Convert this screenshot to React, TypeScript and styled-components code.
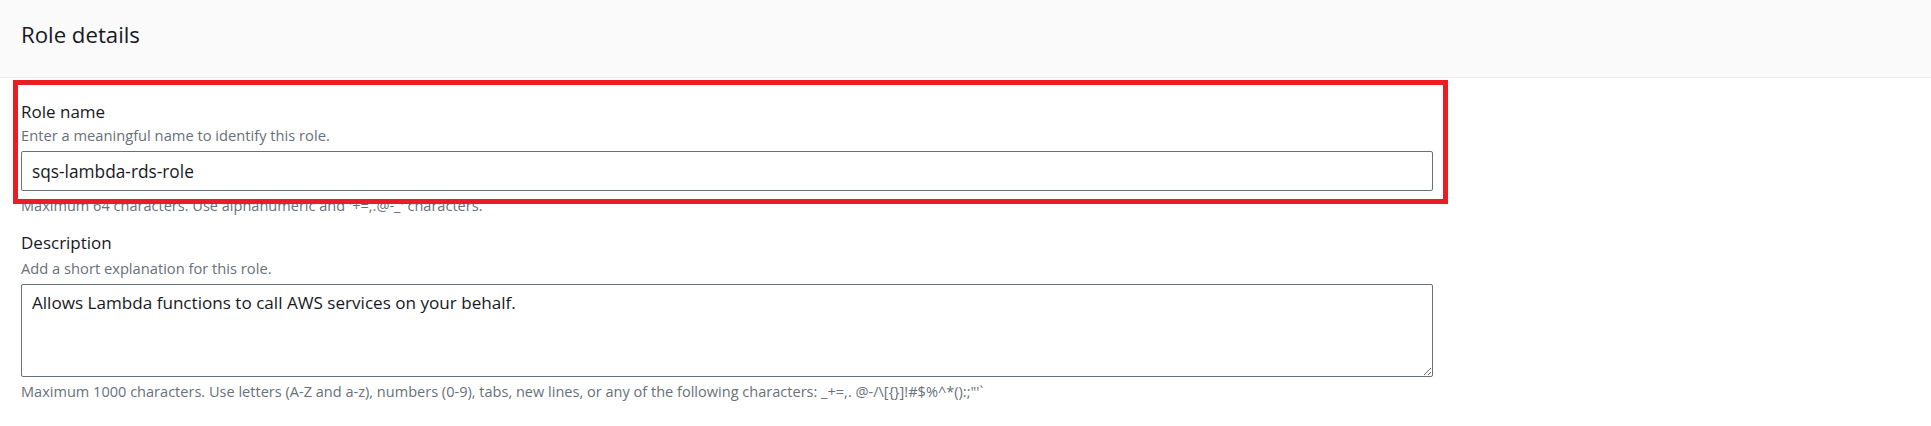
import React from "react";
import styled, { createGlobalStyle } from "styled-components";

const GlobalStyle = createGlobalStyle`
  html, body {
    margin: 0;
    padding: 0;
    background: #ffffff;
  }
  body {
    font-family: "Open Sans", "Noto Sans", Arial, sans-serif;
    color: #16191f;
  }
`;

const Page = styled.div`
  position: relative;
  width: 1931px;
  min-height: 426px;
  background: #ffffff;
`;

const Header = styled.header`
  box-sizing: border-box;
  height: 78px;
  padding: 21px 0 0 21px;
  background: #fafafa;
  border-bottom: 1px solid #eaeded;
`;

const Title = styled.h2`
  margin: 0;
  font-size: 22.2px;
  line-height: 28px;
  font-weight: 400;
  color: #16191f;
`;

const Body = styled.div`
  box-sizing: border-box;
  width: 1433px;
  padding: 23px 0 0 21px;
  display: flex;
  flex-direction: column;
  gap: 17px;
`;

const Field = styled.div`
  display: flex;
  flex-direction: column;
`;

const Label = styled.label`
  font-size: 17px;
  line-height: 22px;
  color: #16191f;
`;

const Hint = styled.div<{ $gap?: number }>`
  margin-top: ${(p) => p.$gap ?? 2}px;
  font-size: 14.7px;
  line-height: 20px;
  color: #687078;
`;

const Constraint = styled.div`
  margin-top: 4px;
  font-size: 14.55px;
  line-height: 20px;
  color: #687078;
`;

const TextInput = styled.input`
  box-sizing: border-box;
  margin-top: 6px;
  width: 100%;
  height: 40px;
  padding: 0 10px;
  border: 1px solid #687078;
  border-radius: 2px;
  font-family: "Open Sans", "Noto Sans", Arial, sans-serif;
  font-size: 17.3px;
  color: #16191f;
  background: #ffffff;
  outline: none;
`;

const TextArea = styled.textarea`
  box-sizing: border-box;
  margin-top: 6px;
  width: 100%;
  height: 93px;
  padding: 7px 10px;
  border: 1px solid #687078;
  border-radius: 2px;
  font-family: "Open Sans", "Noto Sans", Arial, sans-serif;
  font-size: 17.1px;
  line-height: 22px;
  color: #16191f;
  background: #ffffff;
  outline: none;
  resize: vertical;
  display: block;
`;

const Highlight = styled.div`
  position: absolute;
  left: 13px;
  top: 80px;
  width: 1435px;
  height: 124px;
  box-sizing: border-box;
  border: 5px solid #ec1c24;
  pointer-events: none;
`;

export default function App() {
  return (
    <Page>
      <GlobalStyle />
      <Header>
        <Title>Role details</Title>
      </Header>
      <Body>
        <Field>
          <Label htmlFor="role-name">Role name</Label>
          <Hint>Enter a meaningful name to identify this role.</Hint>
          <TextInput id="role-name" readOnly value="sqs-lambda-rds-role" />
          <Constraint>
            Maximum 64 characters. Use alphanumeric and '+=,.@-_' characters.
          </Constraint>
        </Field>
        <Field>
          <Label htmlFor="role-desc">Description</Label>
          <Hint $gap={4}>Add a short explanation for this role.</Hint>
          <TextArea
            id="role-desc"
            readOnly
            value="Allows Lambda functions to call AWS services on your behalf."
          />
          <Constraint>
            Maximum 1000 characters. Use letters (A-Z and a-z), numbers (0-9), tabs, new lines, or any of the following characters: _+=,. @-/\[{"{}"}]!#$%^*():;"'`
          </Constraint>
        </Field>
      </Body>
      <Highlight />
    </Page>
  );
}
